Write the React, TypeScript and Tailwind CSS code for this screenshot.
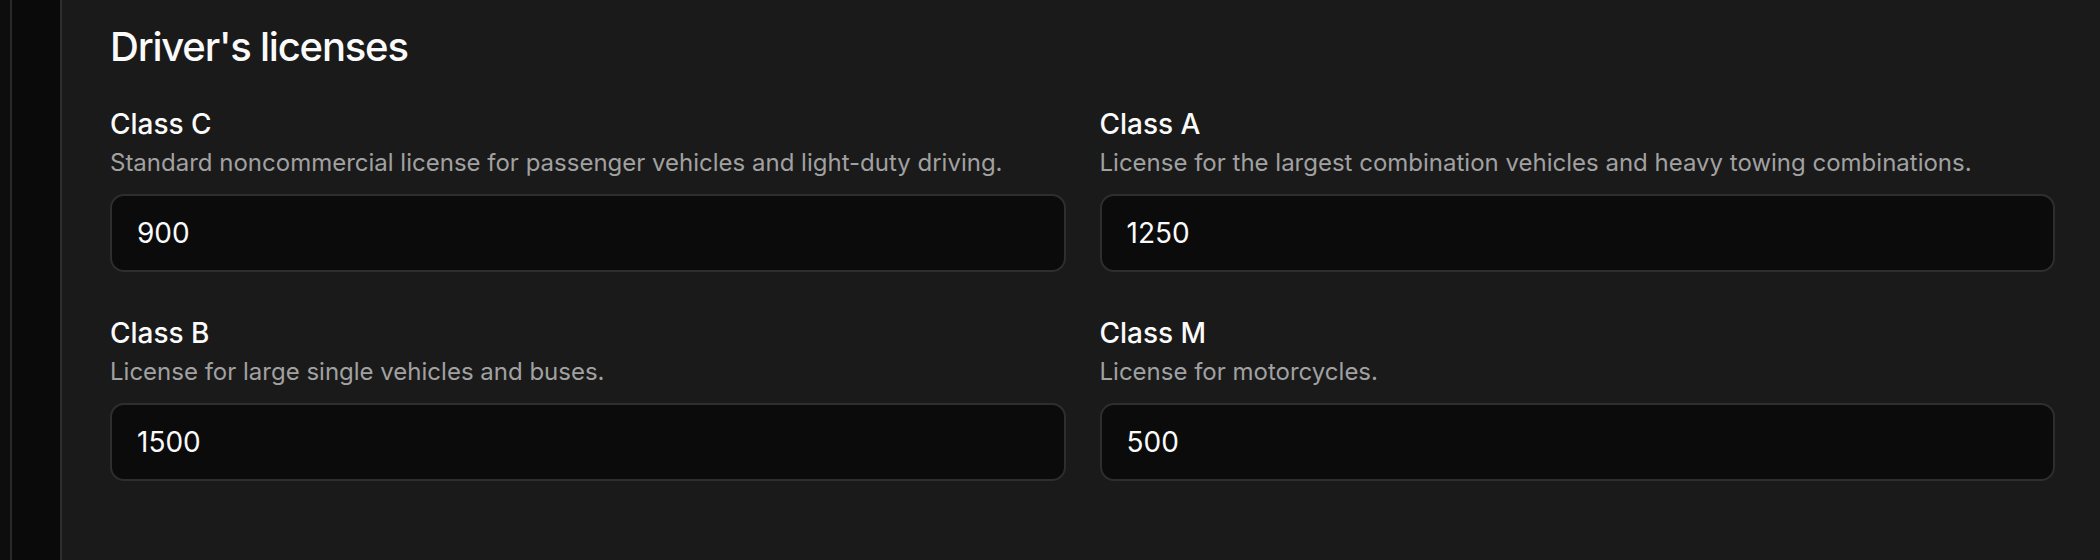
const licenses = [
  {
    id: "class-c",
    label: "Class C",
    description:
      "Standard noncommercial license for passenger vehicles and light-duty driving.",
    value: "900",
  },
  {
    id: "class-a",
    label: "Class A",
    description:
      "License for the largest combination vehicles and heavy towing combinations.",
    value: "1250",
  },
  {
    id: "class-b",
    label: "Class B",
    description: "License for large single vehicles and buses.",
    value: "1500",
  },
  {
    id: "class-m",
    label: "Class M",
    description: "License for motorcycles.",
    value: "500",
  },
];

export default function App() {
  return (
    <div className="flex h-screen overflow-hidden bg-[#1a1a1a] font-['Inter',sans-serif] text-[#fafafa] antialiased">
      {/* rails on the left edge */}
      <div className="w-[12px] shrink-0 border-r-2 border-[#2a2a2a] bg-[#0d0d0d]" />
      <div className="w-[50px] shrink-0 border-r-2 border-[#2e2e2e] bg-[#0a0a0a]" />

      <main className="flex-1 pl-[48px] pr-[45px] pt-[19px]">
        <section>
          <h2 className="text-[40px] leading-[56px] font-medium tracking-[-0.03em]">
            Driver's licenses
          </h2>
          <div className="mt-[29px] grid grid-cols-2 gap-x-[34px] gap-y-[41px]">
            {licenses.map((l) => (
              <LicenseField key={l.id} {...l} />
            ))}
          </div>
        </section>
      </main>
    </div>
  );
}

function LicenseField({
  id,
  label,
  description,
  value,
}: (typeof licenses)[number]) {
  return (
    <div className="flex flex-col">
      <label htmlFor={id} className="text-[28px] leading-[40px] font-medium">
        {label}
      </label>
      <p className="mt-[3px] text-[24px] leading-[32px] text-[#a1a1a1]">
        {description}
      </p>
      <input
        id={id}
        type="text"
        defaultValue={value}
        className="mt-[15px] h-[78px] w-full rounded-[14px] border-2 border-[#2e2e2e] bg-[#0b0b0b] px-[25px] text-[28px] text-[#fafafa] outline-none"
      />
    </div>
  );
}
